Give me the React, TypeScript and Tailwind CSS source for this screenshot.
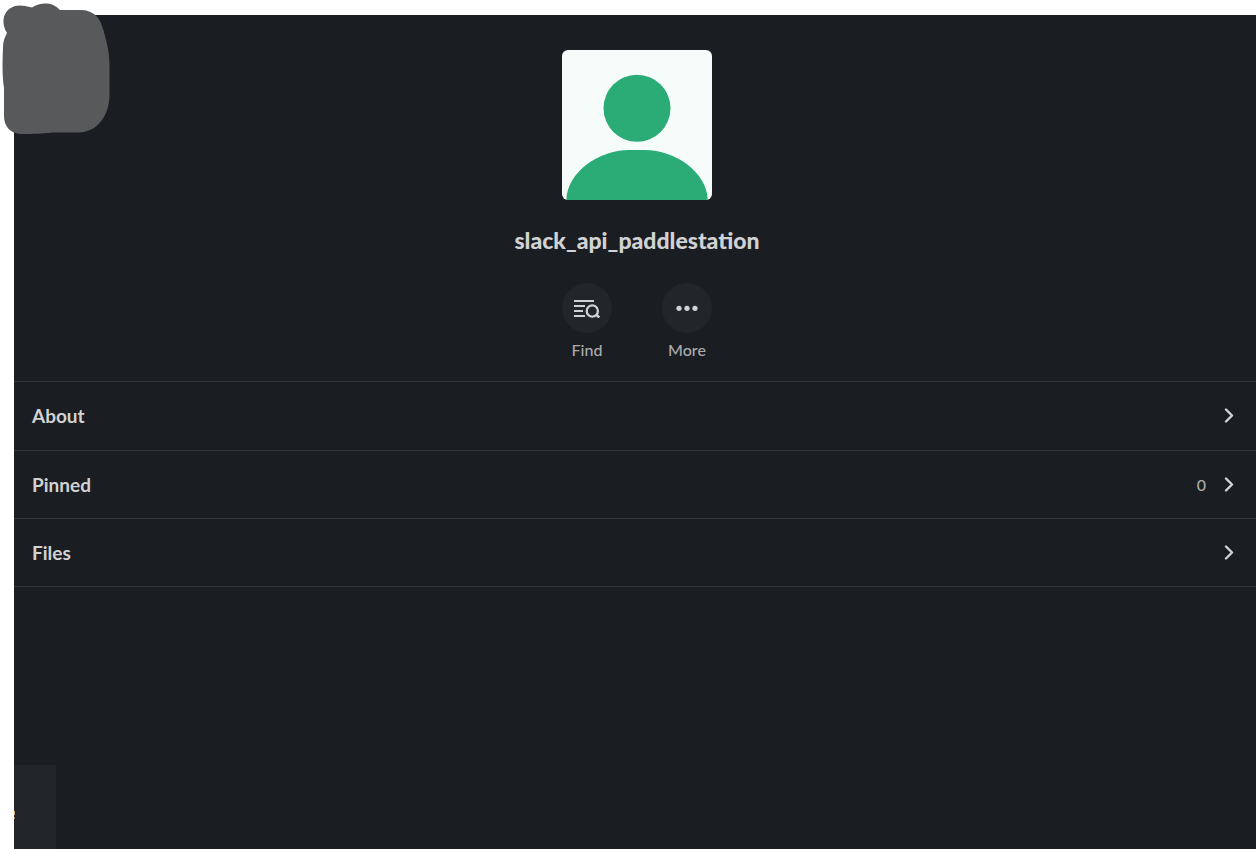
import type { ReactNode } from "react";

type Section = { label: string; count?: number };

const sections: Section[] = [
  { label: "About" },
  { label: "Pinned", count: 0 },
  { label: "Files" },
];

function Avatar() {
  return (
    <svg className="size-[150px] rounded-md" viewBox="0 0 150 150" role="img" aria-label="Profile photo">
      <rect width="150" height="150" fill="#f5fcf9" />
      <circle cx="75" cy="58.3" r="33.5" fill="#2bac76" />
      <path d="M4.300 150C5 122 37 100 67 100H83C113 100 145 122 145.700 150Z" fill="#2bac76" />
    </svg>
  );
}

function FindIcon() {
  return (
    <svg className="h-5 w-7" viewBox="0 0 28 20" fill="none" stroke="currentColor" strokeWidth="2" aria-hidden="true">
      <path d="M1 3H21M1 8H12M1 13H10M1 18H12" />
      <circle cx="19.300" cy="13" r="5.600" strokeWidth="2.300" />
      <path d="M23 16.500L26.300 19.500" strokeWidth="2.500" />
    </svg>
  );
}

function MoreIcon() {
  return (
    <svg className="h-5 w-7" viewBox="0 0 28 20" fill="currentColor" aria-hidden="true">
      <circle cx="6" cy="10.300" r="2.600" />
      <circle cx="14" cy="10.300" r="2.600" />
      <circle cx="22" cy="10.300" r="2.600" />
    </svg>
  );
}

function Chevron() {
  return (
    <svg className="h-4 w-3" viewBox="0 0 12 16" fill="none" stroke="#d1d2d3" strokeWidth="2.400" strokeLinecap="round" strokeLinejoin="round" aria-hidden="true">
      <path d="M3 1.500L9 7.500L3 13.500" />
    </svg>
  );
}

function Action({ label, children }: { label: string; children: ReactNode }) {
  return (
    <button className="flex w-[50px] flex-col items-center gap-[7px] text-base leading-5 font-medium text-[#ababad]">
      <span className="flex size-[50px] items-center justify-center rounded-full bg-[#222529] text-[#d1d2d3]">
        {children}
      </span>
      {label}
    </button>
  );
}

export default function App() {
  return (
    <div className="relative flex min-h-screen flex-col bg-white pt-[15px] pl-[14px] font-['Lato',sans-serif]">
      <main className="flex grow flex-col bg-[#1a1d21] text-[#d1d2d3]">
        <header className="flex flex-col items-center pt-[35px] pb-[21px] pl-1">
          <Avatar />
          <h1 className="mt-6 font-['Lato_Black','Lato',sans-serif] text-[23px] leading-8 font-black">slack_api_paddlestation</h1>
          <div className="mt-[27px] flex gap-[50px]">
            <Action label="Find"><FindIcon /></Action>
            <Action label="More"><MoreIcon /></Action>
          </div>
        </header>
        <nav className="flex flex-col border-t border-[#35373b]">
          {sections.map(({ label, count }) => (
            <button key={label} className="flex h-[68px] items-center border-b border-[#35373b] pr-[21px] pl-[18px] text-left first:h-[69px] first:pb-px">
              <span className="grow text-[19px] leading-7 font-bold">{label}</span>
              {count !== undefined && <span className="mr-[17px] text-base leading-6 font-medium text-[#ababad]">{count}</span>}
              <Chevron />
            </button>
          ))}
        </nav>
        <div className="mt-auto flex h-[84px] w-[42px] items-center bg-[#222529]">
          <svg className="mt-4 h-2 w-1" viewBox="0 0 4 8" aria-hidden="true">
            <path d="M0 0H1V4H0Z" fill="#d5a564" />
            <path d="M0 6H1V8H0Z" fill="#9a6c3c" />
          </svg>
        </div>
      </main>
      <svg className="absolute top-0 left-0 h-[140px] w-[116px]" viewBox="0 0 116 140" aria-hidden="true">
        <path
          d="M7 33C2 25 2 15 9 9C16 4 22 5 32 7.500C40 2.500 52 1 60 10L82 10C94 11 99 17 102 26C106 38 109.500 52 109.500 64V96C109 115 98 132 79 132.500H53C40 134 28 134 20 134C10 133 4 126 4 116V88C2 76 2.500 60 3 47C3 41 5 37 7 33Z"
          fill="#58595a"
        />
      </svg>
    </div>
  );
}
